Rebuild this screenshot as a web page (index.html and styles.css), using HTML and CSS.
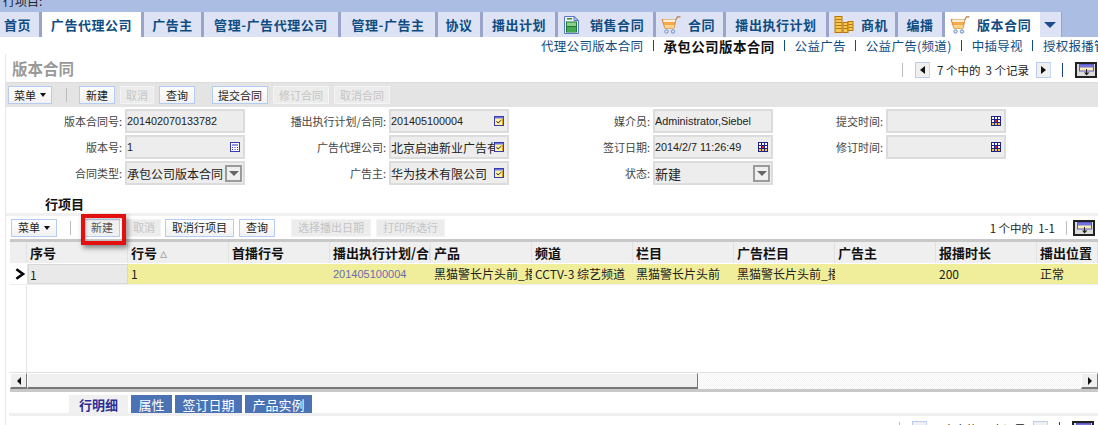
FILE: index.html
```html
<!DOCTYPE html>
<html lang="zh">
<head>
<meta charset="utf-8">
<title>版本合同</title>
<link rel="stylesheet" href="styles.css">
</head>
<body>
<svg class="defs" width="0" height="0">
  <symbol id="i-doc" viewBox="0 0 16 18">
    <path d="M1.5 .5H11L15.5 4.5V17.5H1.5Z" fill="#eef2fb" stroke="#5b78c4"/>
    <path d="M11 .5V4.5H15.5Z" fill="#b9c8ec" stroke="#5b78c4"/>
    <rect x="4" y="2" width="5" height="1.5" fill="#2f8f3c"/>
    <rect x="3.5" y="6" width="10" height="10" fill="#8fcf8c" stroke="#1e7a32"/>
    <rect x="4" y="10" width="9" height="1" fill="#1e7a32"/>
    <rect x="4" y="11" width="9" height="5" fill="#4aa852"/>
  </symbol>
  <symbol id="i-cart" viewBox="0 0 20 18">
    <path d="M1 3.5H15L13 12.5H4Z" fill="#f5a94a" stroke="#d9873a"/>
    <path d="M2 3.5H14.500L14 6H2.500Z" fill="#f8f0dc"/>
    <path d="M3.500 9H13.500L13 12.500H4Z" fill="#f8d48c"/>
    <path d="M15 3.500L16.500 .8H19.500" fill="none" stroke="#b07a52" stroke-width="1.200"/>
    <circle cx="5.500" cy="15.500" r="1.700" fill="#dce6f6" stroke="#6a8cc4"/>
    <circle cx="12" cy="15.500" r="1.700" fill="#dce6f6" stroke="#6a8cc4"/>
  </symbol>
  <symbol id="i-coins" viewBox="0 0 19 18">
    <rect x=".5" y=".5" width="7" height="16" fill="#f8c750" stroke="#b87708"/>
    <path d="M1 3.500H7M1 6.500H7M1 9.500H7M1 12.500H7" stroke="#b87708"/>
    <rect x="8.500" y="6.500" width="5" height="10" fill="#f8c750" stroke="#b87708"/>
    <path d="M9 9.500H13M9 12.500H13" stroke="#b87708"/>
    <rect x="13.500" y="5.500" width="5" height="9" fill="#f8c750" stroke="#b87708"/>
    <path d="M14 8.500H18M14 11.500H18" stroke="#b87708"/>
  </symbol>
  <symbol id="i-pick" viewBox="0 0 10 10">
    <rect x=".5" y=".5" width="9" height="9" fill="#fff2a0" stroke="#3b3bb0"/>
    <rect x="1" y="1" width="8" height="1.500" fill="#6f78d8"/>
    <path d="M2.500 5L4 7L7.500 4" fill="none" stroke="#333" stroke-width="1"/>
    <rect x="8" y="3" width="1" height="6" fill="#e0a020"/>
  </symbol>
  <symbol id="i-calc" viewBox="0 0 10 10">
    <rect x=".5" y=".5" width="9" height="9" fill="#fff" stroke="#3b3bb0"/>
    <rect x="2" y="2" width="6" height="2" fill="#8f98e8"/>
    <path d="M2 5.500H3M4.500 5.500H5.500M7 5.500H8M2 7.500H3M4.500 7.500H5.500M7 7.500H8" stroke="#3b3bb0"/>
  </symbol>
  <symbol id="i-cal" viewBox="0 0 10 10">
    <rect width="10" height="10" fill="#20208c"/>
    <path d="M1 1H3V3H1ZM4 1H6V3H4ZM7 1H9V3H7ZM1 4H3V6H1ZM7 4H9V6H7Z" fill="#fff"/>
    <rect x="4" y="4" width="2" height="2" fill="#e02020"/>
    <path d="M1 7H3V9H1ZM4 7H6V9H4ZM7 7H9V9H7Z" fill="#f0c830"/>
  </symbol>
  <symbol id="i-dock" viewBox="0 0 15 12">
    <rect x=".5" y=".5" width="14" height="6.500" fill="#fbeeb8" stroke="#5a5ac8"/>
    <rect x="1" y="1" width="13" height="2.500" fill="#7474dc"/>
    <rect x="7" y="5" width="1" height="4" fill="#222"/>
    <path d="M5 8.500H10.500L7.500 11.500Z" fill="#222"/>
  </symbol>
</svg>

<div class="topbar"><span class="topbar-text">行项目:</span></div>

<nav class="tabs">
  <a class="tab tab-first">首页</a>
  <a class="tab tab-on">广告代理公司</a>
  <a class="tab">广告主</a>
  <a class="tab">管理-广告代理公司</a>
  <a class="tab">管理-广告主</a>
  <a class="tab">协议</a>
  <a class="tab">播出计划</a>
  <a class="tab tab-icon"><svg class="ti ti-doc"><use href="#i-doc"/></svg>销售合同</a>
  <a class="tab tab-icon"><svg class="ti"><use href="#i-cart"/></svg>合同</a>
  <a class="tab">播出执行计划</a>
  <a class="tab tab-icon"><svg class="ti"><use href="#i-coins"/></svg>商机</a>
  <a class="tab">编播</a>
  <a class="tab tab-icon tab-on tab-last"><svg class="ti"><use href="#i-cart"/></svg>版本合同</a>
  <a class="tab tab-more"><span class="down-large"></span></a>
</nav>

<div class="subnav">
  <a class="sub">代理公司版本合同</a><i class="subsep"></i>
  <a class="sub sub-on">承包公司版本合同</a><i class="subsep"></i>
  <a class="sub">公益广告</a><i class="subsep"></i>
  <a class="sub">公益广告(频道)</a><i class="subsep"></i>
  <a class="sub">中插导视</a><i class="subsep"></i>
  <a class="sub">授权报播管理</a>
</div>

<main class="page">
  <div class="titlebar">
    <h1 class="title">版本合同</h1>
    <div class="pager pager1">
      <i class="gsep"></i>
      <button class="navbtn"><span class="tri-left"></span></button>
      <span class="pager-text">7 个中的&nbsp; 3 个记录</span>
      <button class="navbtn"><span class="tri-right"></span></button>
      <i class="bsep"></i>
      <button class="dock dock-on"><svg class="dock-i"><use href="#i-dock"/></svg></button>
    </div>
  </div>

  <div class="toolbar grey">
    <button class="btn menu">菜单<span class="down"></span></button>
    <i class="gsep sep-a"></i>
    <button class="btn w36">新建</button>
    <button class="btn off w34">取消</button>
    <button class="btn w36">查询</button>
    <button class="btn w56 gap-l">提交合同</button>
    <button class="btn off w56">修订合同</button>
    <button class="btn off w56">取消合同</button>
  </div>

  <div class="form">
    <label class="lbl">版本合同号:</label>
    <div class="field"><span class="v">201402070133782</span></div>
    <label class="lbl">播出执行计划/合同:</label>
    <div class="field"><span class="v">201405100004</span><svg class="fi"><use href="#i-pick"/></svg></div>
    <label class="lbl">媒介员:</label>
    <div class="field"><span class="v">Administrator,Siebel</span></div>
    <label class="lbl">提交时间:</label>
    <div class="field"><span class="v"></span><svg class="fi"><use href="#i-cal"/></svg></div>

    <label class="lbl">版本号:</label>
    <div class="field"><span class="v">1</span><svg class="fi"><use href="#i-calc"/></svg></div>
    <label class="lbl">广告代理公司:</label>
    <div class="field"><span class="v v-cjk">北京启迪新业广告有限公司</span><svg class="fi"><use href="#i-pick"/></svg></div>
    <label class="lbl">签订日期:</label>
    <div class="field"><span class="v">2014/2/7 11:26:49</span><svg class="fi"><use href="#i-cal"/></svg></div>
    <label class="lbl">修订时间:</label>
    <div class="field"><span class="v"></span><svg class="fi"><use href="#i-cal"/></svg></div>

    <label class="lbl">合同类型:</label>
    <div class="field"><span class="v v-cjk">承包公司版本合同</span><span class="combo"></span></div>
    <label class="lbl">广告主:</label>
    <div class="field"><span class="v v-cjk">华为技术有限公司</span><svg class="fi"><use href="#i-pick"/></svg></div>
    <label class="lbl">状态:</label>
    <div class="field"><span class="v v-cjk v-big">新建</span><span class="combo"></span></div>
  </div>

  <h2 class="section">行项目</h2>

  <div class="list">
    <div class="toolbar white">
      <button class="btn menu menu2">菜单<span class="down"></span></button>
      <i class="gsep sep-b"></i>
      <div class="hl-wrap">
        <button class="btn w36 btn-hl">新建</button>
        <span class="highlight"></span>
      </div>
      <button class="btn off w34 tight">取消</button>
      <button class="btn w68">取消行项目</button>
      <button class="btn w36">查询</button>
      <button class="btn off w80 gap-l2">选择播出日期</button>
      <button class="btn off w68">打印所选行</button>
      <div class="pager pager2">
        <span class="pager-text">1 个中的&nbsp; 1-1</span>
        <i class="gsep"></i>
        <button class="dock"><svg class="dock-i"><use href="#i-dock"/></svg></button>
      </div>
    </div>

    <div class="grid">
      <div class="grow ghead">
        <div class="gh corner"></div>
        <div class="gh">序号</div>
        <div class="gh">行号 <span class="sort">▵</span></div>
        <div class="gh">首播行号</div>
        <div class="gh">播出执行计划/合同</div>
        <div class="gh">产品</div>
        <div class="gh">频道</div>
        <div class="gh">栏目</div>
        <div class="gh">广告栏目</div>
        <div class="gh">广告主</div>
        <div class="gh">报播时长</div>
        <div class="gh">播出位置</div>
      </div>
      <div class="grow gdata">
        <div class="gc corner"><svg class="chev" viewBox="0 0 10 10"><path d="M2 1L7.500 5L2 9" fill="none" stroke="#000" stroke-width="2.200"/></svg></div>
        <div class="gc"><span class="cell-input">1</span></div>
        <div class="gc">1</div>
        <div class="gc"></div>
        <div class="gc glink">201405100004</div>
        <div class="gc">黑猫警长片头前_播出</div>
        <div class="gc">CCTV-3 综艺频道</div>
        <div class="gc">黑猫警长片头前</div>
        <div class="gc">黑猫警长片头前_播出</div>
        <div class="gc"></div>
        <div class="gc">200</div>
        <div class="gc">正常</div>
      </div>
      <div class="gbody"></div>
      <div class="hscroll">
        <span class="sb-btn"><span class="tri-left tri-s"></span></span>
        <span class="sb-thumb"></span>
        <span class="sb-track"></span>
        <span class="sb-btn"><span class="tri-right tri-s"></span></span>
      </div>
    </div>

    <div class="subtabs">
      <a class="st st-on">行明细</a>
      <a class="st w41">属性</a>
      <a class="st w67">签订日期</a>
      <a class="st w67">产品实例</a>
    </div>
    <div class="strip"></div>
    <div class="pager pager3">
      <i class="gsep"></i>
      <button class="navbtn"></button>
      <span class="pager-text">1 个中的&nbsp; 1 个记录</span>
      <button class="navbtn"></button>
      <i class="bsep"></i>
      <button class="dock dock-on"><svg class="dock-i"><use href="#i-dock"/></svg></button>
    </div>
  </div>
</main>
</body>
</html>
```

FILE: styles.css
```css
* { box-sizing: border-box; }
html, body { margin: 0; padding: 0; height: 425px; overflow: hidden; background: #fff; }
body { font-family: "Noto Sans CJK SC", "Liberation Sans", sans-serif; font-size: 12px; color: #222; }
.defs { display: block; height: 0; }
i { font-style: normal; }
button { font-family: inherit; padding: 0; margin: 0; }

.topbar { height: 12px; background: #acbde3; overflow: hidden; padding-left: 3px; }
.topbar-text { display: block; margin-top: -8px; font-size: 12px; line-height: 17px; color: #222; }

.tabs { display: grid; height: 25px; background: #acbde3;
  grid-template-columns: 42px 102px 60px 137px 97px 45px 75px 98px 70px 103px 69px 47px 96px 21px 1fr; }
.tab { display: flex; align-items: center; justify-content: center; gap: 7px;
  background: #dde3f4; border-right: 3px solid #98a4c9; font-weight: 700; font-size: 13px; letter-spacing: .55px; color: #0e4c82; white-space: nowrap; }
.tab-first { justify-content: flex-start; padding-left: 4px; }
.tab-on { background: #fff; border-right-color: #98a4c9; }
.tab-last { border-right: 1px solid #dde3f4; }
.tab-more { border-right: 1px solid #98a4c9; padding-right: 2px; }
.tab-icon { justify-content: flex-start; padding-left: 5px; }
.ti { width: 20px; height: 18px; flex: none; }
.ti-doc { width: 16px; margin-right: 4px; }
.down-large { width: 0; height: 0; border: 6px solid transparent; border-top: 6px solid #1c4c8c; border-bottom: 0; }

.subnav { height: 17px; display: flex; align-items: center; justify-content: flex-start; padding-left: 541px; white-space: nowrap; overflow: hidden; font-size: 12.5px; letter-spacing: .3px; color: #0e4c82; }
.sub { flex: none; }
.sub-on { font-weight: 700; font-size: 13.5px; letter-spacing: .4px; color: #111; }
.subsep { flex: none; width: 1px; height: 11px; background: #0e4c82; margin: 0 9.5px; }

.page { margin-left: 5px; border-left: 1px solid #e0e6f4; height: 371px; }
.titlebar { height: 28px; display: flex; align-items: center; justify-content: space-between; padding: 0 1px 0 6px; }
.title { margin: 0; font-size: 15.5px; font-weight: 700; color: #999; line-height: 20px; }
.pager { display: flex; align-items: center; font-size: 11.5px; color: #222; }
.pager1 { padding-top: 3px; }
.pager-text { white-space: nowrap; }
.gsep { display: block; flex: none; width: 1px; height: 14px; background: #bbb; }
.bsep { display: block; flex: none; width: 1px; height: 14px; background: #1c3f7c; margin: 0 12px 0 11px; }
.navbtn { width: 15px; height: 16px; border: 1px solid #b9cdf0; border-right-color: #c8d8f2; background: #f0f0f0; display: flex; align-items: center; justify-content: center; margin: 0 7px 0 12px; }
.pager-text + .navbtn { margin-left: 7px; margin-right: 0; }
.tri-left { width: 0; height: 0; border: 4px solid transparent; border-right: 5px solid #111; border-left: 0; }
.tri-right { width: 0; height: 0; border: 4px solid transparent; border-left: 5px solid #111; border-right: 0; }
.tri-s { border-width: 4px; }
.dock { width: 22px; height: 16px; border: 2px solid #222; background: #dcdcdc; display: flex; align-items: center; justify-content: center; }
.dock-i { width: 15px; height: 12px; }

.toolbar { display: flex; align-items: center; }
.grey { height: 25px; background: #e4e4e4; padding-left: 2px; margin-top: 0; border-top: 1px solid #dcdcdc; }
.btn { height: 18px; border: 1px solid #b5cdf5; background: linear-gradient(#fff, #f1f1f1); font-size: 11px; line-height: 15px; color: #222; margin-right: 5px; display: inline-flex; align-items: center; justify-content: center; white-space: nowrap; }
.off { border-color: #f4f4f4; background: #ececec; color: #c4c4c4; }
.btn-hl { color: #555; background: #f0f0f0; }
.menu { width: 44px; gap: 4px; }
.menu2 { width: 46px; }
.down { width: 0; height: 0; border: 3.500px solid transparent; border-top: 4px solid #111; border-bottom: 0; }
.w34 { width: 34px; }
.w36 { width: 36px; }
.w56 { width: 56px; }
.w68 { width: 69px; }
.w80 { width: 80px; }
.gap-l { margin-left: 12px; }
.gap-l2 { margin-left: 11px; }
.sep-a { margin: 0 12px 0 9px; height: 14px; }
.sep-b { margin: 0 13px 0 8px; height: 14px; }

.form { display: grid; grid-template-columns: 119px 120px 144px 120px 144px 120px 113px 120px; grid-auto-rows: 24px; row-gap: 2px; padding-top: 2px; }
.lbl { align-self: center; justify-self: end; padding-right: 3px; font-size: 11px; color: #444; white-space: nowrap; }
.field { display: flex; align-items: center; justify-content: space-between; background: #ededed; border: 2px solid #dcdcdc; padding: 0 1px 0 0; overflow: hidden; }
.v { font-family: "Liberation Sans", "Noto Sans CJK SC", sans-serif; font-size: 10.8px; color: #222; white-space: nowrap; overflow: hidden; flex: 1; min-width: 0; }
.v-cjk { font-family: "Noto Sans CJK SC", sans-serif; font-size: 12px; }
.v-big { font-size: 13px; }
.fi { width: 10px; height: 10px; flex: none; margin-right: 2px; }
.combo { width: 17px; height: 17px; flex: none; border: 2px solid #9a9a9a; background: #efefef; display: flex; align-items: center; justify-content: center; }
.combo::after { content: ""; width: 0; height: 0; border: 5px solid transparent; border-top: 5px solid #666; border-bottom: 0; }

.section { margin: 11px 0 0 39px; height: 16px; font-size: 13px; line-height: 16px; font-weight: 700; color: #111; }

.list { margin-top: 1px; }
.white { height: 26px; border-top: 3px solid #f0f0f0; padding-left: 5px; }
.hl-wrap { position: relative; display: flex; }
.highlight { position: absolute; left: -3px; top: -5px; width: 45px; height: 31px; border: 4px solid #e2100e; box-shadow: 2px 3px 5px rgba(0,0,0,.45), inset 1px 1px 3px rgba(0,0,0,.25); pointer-events: none; }
.tight { margin-left: 2px; margin-right: 4px; }
.pager2 { margin-left: auto; padding-right: 3px; }
.pager2 .gsep { margin: 0 6px 0 11px; }

.grid { margin-left: 4px; border-top: 3px solid #c8c8c8; border-bottom: 3px solid #c8c8c8; height: 153px; display: flex; flex-direction: column; }
.grow { display: grid; grid-template-columns: 17px repeat(10, 101px) 1fr; }
.ghead { height: 22px; background: #efefef; border-bottom: 1px solid #fff; }
.gh { border-right: 1px solid #e2e2e2; padding-left: 3px; font-weight: 700; font-size: 13px; line-height: 21px; color: #111; white-space: nowrap; overflow: hidden; }
.sort { color: #999; font-weight: 400; font-size: 14px; }
.corner { padding: 0; background: #efefef; }
.gdata { height: 21px; background: #f0ee9a; border-bottom: 1px solid #eee; }
.gc { padding-left: 3px; font-size: 12px; line-height: 20px; color: #222; white-space: nowrap; overflow: hidden; }
.gdata .corner { background: #fff; display: flex; align-items: center; justify-content: center; }
.chev { width: 12px; height: 12px; }
.gdata .gc:nth-child(2) { padding: 0 0 0 1px; }
.cell-input { display: block; height: 20px; border: 1px solid #d8d8d8; background: #e9e9e9; padding-left: 1px; }
.glink { color: #6b6bb5; font-family: "Liberation Sans", sans-serif; font-size: 11px; }
.gbody { flex: 1; margin-left: 16px; border-left: 1px solid #e4e4e4; }
.hscroll { height: 17px; display: flex; border-top: 1px solid #e0e0e0; }
.sb-btn { width: 17px; flex: none; background: #f0f0f0; border: 1px solid #fff; border-right-color: #777; border-bottom: 2px solid #777; display: flex; align-items: center; justify-content: center; }
.sb-thumb { width: 671px; flex: none; background: #f0f0f0; border: 1px solid #fff; border-right-color: #777; border-bottom: 2px solid #777; }
.sb-track { flex: 1; background: repeating-conic-gradient(#f2f2f2 0 25%, #fff 0 50%) 0 0 / 2px 2px; }

.subtabs { display: flex; gap: 3px; height: 18px; margin-top: 3px; padding-left: 63px; }
.st { display: flex; align-items: center; justify-content: center; background: #4a72b5; color: #fff; font-size: 13px; }
.st-on { width: 59px; background: #f0f0f0; color: #2d2d96; font-weight: 700; }
.w41 { width: 41px; }
.w67 { width: 67px; }
.strip { margin-left: 3px; height: 3px; background: #efefef; }
.pager3 { justify-content: flex-end; padding: 5px 4px 0 0; }
```
